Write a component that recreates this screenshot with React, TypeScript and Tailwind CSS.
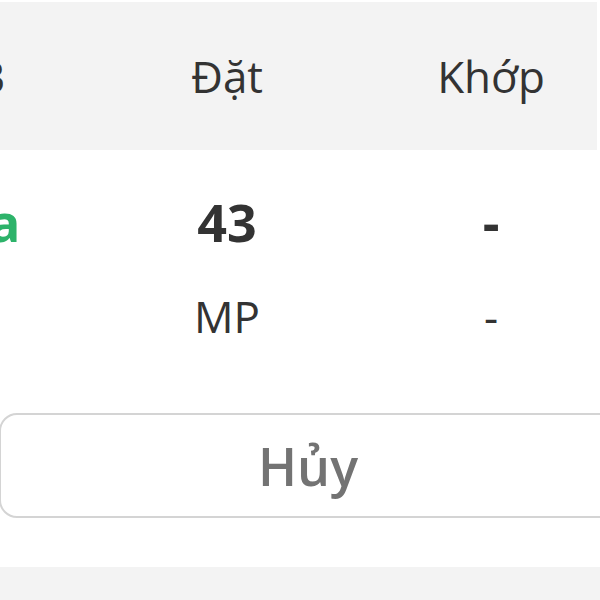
export default function App() {
  return (
    <div className="w-[600px] h-[600px] overflow-hidden bg-white font-['Open_Sans',sans-serif] text-[#333333]">
      {/* Header */}
      <div className="pt-[2px] mr-[3px] overflow-hidden">
        <div className="h-[148px] bg-[#f3f3f3] overflow-hidden">
          <div className="ml-[-169px] grid grid-cols-[264px_264px_264px] h-full items-center text-[44px] leading-[44px] text-center">
            <span>M/B</span>
            <span>Đặt</span>
            <span>Khớp</span>
          </div>
        </div>
      </div>

      {/* Row values */}
      <div className="overflow-hidden">
        <div className="ml-[-169px] grid grid-cols-[264px_264px_264px] pt-[46px] text-center">
          <span className="text-[52px] leading-[52px] font-bold text-[#2db36a]">Mua</span>
          <span className="text-[52px] leading-[52px] font-bold">43</span>
          <span className="text-[52px] leading-[52px] font-bold">-</span>
        </div>
        <div className="ml-[-169px] grid grid-cols-[264px_264px_264px] mt-[46px] text-center text-[44px] leading-[44px]">
          <span></span>
          <span>MP</span>
          <span>-</span>
        </div>
      </div>

      {/* Cancel button */}
      <div className="mt-[75px] ml-[-1px] w-[618px]">
        <button className="w-full h-[105px] flex items-center justify-center border-2 border-[#d4d4d4] rounded-[18px] bg-white text-[52px] leading-[52px] font-semibold text-[#737373]">
          Hủy
        </button>
      </div>

      <div className="mt-[49px] h-[33px] bg-[#f3f3f3]" />
    </div>
  );
}
